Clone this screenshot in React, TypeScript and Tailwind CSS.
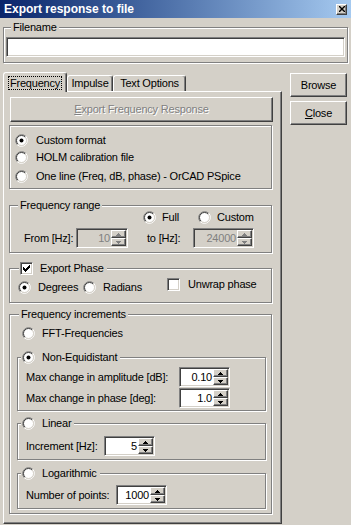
import type { ReactNode } from "react";

const raised =
  "border border-t-white border-l-white border-r-[#404040] border-b-[#404040] shadow-[inset_-1px_-1px_0_#808080]";
const sunken =
  "border border-t-[#808080] border-l-[#808080] border-r-white border-b-white shadow-[inset_1px_1px_0_#404040,inset_-1px_-1px_0_#d4d0c8]";
const etched = "border border-[#808080] shadow-[inset_1px_1px_0_#ffffff,1px_1px_0_#ffffff]";

function Radio({ checked = false }: { checked?: boolean }) {
  return (
    <svg width="13" height="13" viewBox="0 0 13 13" className="shrink-0">
      <circle cx="6.5" cy="6.5" r="5" fill="#ffffff" />
      <path d="M2.26 10.74A6 6 0 0 1 10.74 2.26" fill="none" stroke="#808080" />
      <path d="M10.74 2.26A6 6 0 0 1 2.26 10.74" fill="none" stroke="#ffffff" />
      <path d="M2.96 10.04A5 5 0 0 1 10.04 2.96" fill="none" stroke="#404040" />
      <path d="M10.04 2.96A5 5 0 0 1 2.96 10.04" fill="none" stroke="#d4d0c8" />
      {checked ? <circle cx="6.5" cy="6.5" r="2" fill="#000000" /> : null}
    </svg>
  );
}

function Check({ checked = false }: { checked?: boolean }) {
  const cols = [2, 3, 4, 3, 2, 1, 0];
  return (
    <span className={`flex h-[13px] w-[13px] shrink-0 items-center justify-center bg-white ${sunken}`}>
      {checked ? (
        <svg width="7" height="7" viewBox="0 0 7 7">
          {cols.map((y, x) => (
            <rect key={x} x={x} y={y} width="1" height="3" fill="#000000" />
          ))}
        </svg>
      ) : null}
    </span>
  );
}

function Arrow({ up, color }: { up?: boolean; color: string }) {
  return (
    <svg width="5" height="3" viewBox="0 0 5 3">
      {up ? (
        <>
          <rect x="2" y="0" width="1" height="1" fill={color} />
          <rect x="1" y="1" width="3" height="1" fill={color} />
          <rect x="0" y="2" width="5" height="1" fill={color} />
        </>
      ) : (
        <>
          <rect x="0" y="0" width="5" height="1" fill={color} />
          <rect x="1" y="1" width="3" height="1" fill={color} />
          <rect x="2" y="2" width="1" height="1" fill={color} />
        </>
      )}
    </svg>
  );
}

function Spin({ value, w, disabled }: { value: string; w: string; disabled?: boolean }) {
  const arrow = disabled ? "#808080" : "#000000";
  return (
    <div
      className={`flex h-[20px] shrink-0 p-[1px] ${w} ${sunken} ${
        disabled ? "bg-[#d4d0c8] text-[#808080]" : "bg-white text-black"
      }`}
    >
      <span className="flex-1 pr-[1px] text-right leading-[17px]">{value}</span>
      <div className="flex w-[15px] flex-col">
        <div className={`flex flex-1 items-center justify-center bg-[#d4d0c8] ${raised}`}>
          <Arrow up color={arrow} />
        </div>
        <div className={`flex flex-1 items-center justify-center bg-[#d4d0c8] ${raised}`}>
          <Arrow color={arrow} />
        </div>
      </div>
    </div>
  );
}

function GroupBox({
  label,
  labelClass = "left-[7px]",
  legend,
  className,
  children,
}: {
  label?: string;
  labelClass?: string;
  legend?: ReactNode;
  className: string;
  children: ReactNode;
}) {
  return (
    <div className={`relative ${etched} ${className}`}>
      {label ? (
        <span className={`absolute -top-[7px] bg-[#d4d0c8] px-[2px] ${labelClass}`}>{label}</span>
      ) : null}
      {legend}
      {children}
    </div>
  );
}

function SubLegend({ label, checked }: { label: string; checked?: boolean }) {
  return (
    <span className="absolute -top-[7px] left-[3px] flex items-center gap-[7px] bg-[#d4d0c8] px-[1px] pr-[3px]">
      <Radio checked={checked} />
      {label}
    </span>
  );
}

function Btn({ children, className }: { children: ReactNode; className: string }) {
  return (
    <div className={`flex items-center justify-center bg-[#d4d0c8] ${raised} ${className}`}>{children}</div>
  );
}

export default function App() {
  return (
    <div className="h-[525px] w-[351px] overflow-hidden bg-[#d4d0c8] font-['Liberation_Sans',Arial,sans-serif] text-[11px] leading-[13px] tracking-[-0.2px] text-black">
      <div className="flex h-[18px] items-center justify-between bg-linear-to-r from-[#0a246a] to-[#a6caf0] px-[4px]">
        <span className="text-[12px] font-bold tracking-normal text-white">Export response to file</span>
        <span className={`flex h-[11px] w-[11px] items-center justify-center bg-[#d4d0c8] ${raised}`}>
          <svg width="6" height="6" viewBox="0 0 6 6">
            <path d="M0 0L6 6M6 0L0 6" stroke="#000000" strokeWidth="1.4" />
          </svg>
        </span>
      </div>

      <div className="px-[3px] pt-[9px]">
        <GroupBox label="Filename" className="h-[36px] px-[2px] pt-[9px]">
          <div className={`h-[20px] bg-white ${sunken}`} />
        </GroupBox>

        <div className="mt-[9px] flex gap-[8px]">
          <div className="flex w-[279px] flex-col">
            <div className="flex h-[19px] items-end">
              <div className="relative z-10 -mb-[1px] flex h-[20px] w-[64px] items-center justify-center rounded-t-[3px] border border-b-0 border-t-white border-l-white border-r-[#404040] bg-[#d4d0c8] shadow-[inset_-1px_0_0_#808080]">
                <span className="border border-dotted border-black px-[1px] leading-[12px]">Frequency</span>
              </div>
              <div className="flex h-[16px] w-[46px] items-center justify-center rounded-t-[3px] border border-b-0 border-t-white border-l-white border-r-[#404040] shadow-[inset_-1px_0_0_#808080]">
                Impulse
              </div>
              <div className="flex h-[16px] w-[73px] items-center justify-center rounded-t-[3px] border border-b-0 border-t-white border-l-white border-r-[#404040] shadow-[inset_-1px_0_0_#808080]">
                Text Options
              </div>
            </div>

            <div className={`flex h-[433px] flex-col pl-[5px] pt-[5px] ${raised}`}>
              <Btn className="ml-[1px] h-[25px] w-[263px] text-[#808080] [text-shadow:1px_1px_0_#ffffff]">
                <span>
                  <span className="underline">E</span>xport Frequency Response
                </span>
              </Btn>

              <GroupBox className="mt-[3px] h-[64px] w-[263px] pl-[5px] pt-[6px]">
                <div className="flex h-[17px] items-center gap-[8px]">
                  <Radio checked />
                  Custom format
                </div>
                <div className="flex h-[17px] items-center gap-[8px]">
                  <Radio />
                  HOLM calibration file
                </div>
                <div className="mt-[2px] flex h-[17px] items-center gap-[8px]">
                  <Radio />
                  One line (Freq, dB, phase) - OrCAD PSpice
                </div>
              </GroupBox>

              <GroupBox
                label="Frequency range"
                labelClass="left-[8px]"
                className="mt-[16px] h-[48px] w-[263px] pt-[3px]"
              >
                <div className="flex h-[17px] items-center pl-[133px]">
                  <div className="flex w-[55px] items-center gap-[6px]">
                    <Radio checked />
                    Full
                  </div>
                  <div className="flex items-center gap-[6px]">
                    <Radio />
                    Custom
                  </div>
                </div>
                <div className="mt-[2px] flex h-[20px] items-center pl-[14px]">
                  <span className="w-[52px]">From [Hz]:</span>
                  <Spin w="w-[52px]" value="10" disabled />
                  <span className="ml-[19px] w-[46px]">to [Hz]:</span>
                  <Spin w="w-[61px]" value="24000" disabled />
                </div>
              </GroupBox>

              <GroupBox
                legend={
                  <span className="absolute -top-[7px] left-[9px] flex items-center gap-[7px] bg-[#d4d0c8] px-[1px] pr-[3px]">
                    <Check checked />
                    Export Phase
                  </span>
                }
                className="mt-[15px] h-[35px] w-[263px] pl-[8px] pt-[10px]"
              >
                <div className="flex h-[17px] items-center">
                  <div className="flex w-[65px] items-center gap-[7px]">
                    <Radio checked />
                    Degrees
                  </div>
                  <div className="flex w-[84px] items-center gap-[7px]">
                    <Radio />
                    Radians
                  </div>
                  <div className="-mt-[6px] flex items-center gap-[8px]">
                    <Check />
                    Unwrap phase
                  </div>
                </div>
              </GroupBox>

              <GroupBox
                label="Frequency increments"
                labelClass="left-[9px]"
                className="mt-[11px] h-[200px] w-[263px] pt-[10px]"
              >
                <div className="flex h-[17px] items-center gap-[7px] pl-[12px]">
                  <Radio />
                  FFT-Frequencies
                </div>

                <GroupBox
                  legend={<SubLegend checked label="Non-Equidistant" />}
                  className="ml-[7px] mt-[15px] h-[54px] w-[249px] pl-[8px] pt-[9px]"
                >
                  <div className="flex h-[20px] items-center">
                    <span className="w-[153px]">Max change in amplitude [dB]:</span>
                    <Spin w="w-[51px]" value="0.10" />
                  </div>
                  <div className="mt-[1px] flex h-[20px] items-center">
                    <span className="w-[153px]">Max change in phase [deg]:</span>
                    <Spin w="w-[51px]" value="1.0" />
                  </div>
                </GroupBox>

                <GroupBox
                  legend={<SubLegend label="Linear" />}
                  className="ml-[7px] mt-[12px] h-[37px] w-[249px] pl-[8px] pt-[12px]"
                >
                  <div className="flex h-[20px] items-center">
                    <span className="w-[78px]">Increment [Hz]:</span>
                    <Spin w="w-[51px]" value="5" />
                  </div>
                </GroupBox>

                <GroupBox
                  legend={<SubLegend label="Logarithmic" />}
                  className="ml-[7px] mt-[13px] h-[36px] w-[249px] pl-[8px] pt-[11px]"
                >
                  <div className="flex h-[20px] items-center">
                    <span className="w-[90px]">Number of points:</span>
                    <Spin w="w-[51px]" value="1000" />
                  </div>
                </GroupBox>
              </GroupBox>
            </div>
          </div>

          <div className="flex w-[57px] flex-col">
            <Btn className="mt-[1px] h-[24px]">Browse</Btn>
            <Btn className="mt-[4px] h-[24px]">
              <span>
                <span className="underline">C</span>lose
              </span>
            </Btn>
          </div>
        </div>
      </div>
    </div>
  );
}
